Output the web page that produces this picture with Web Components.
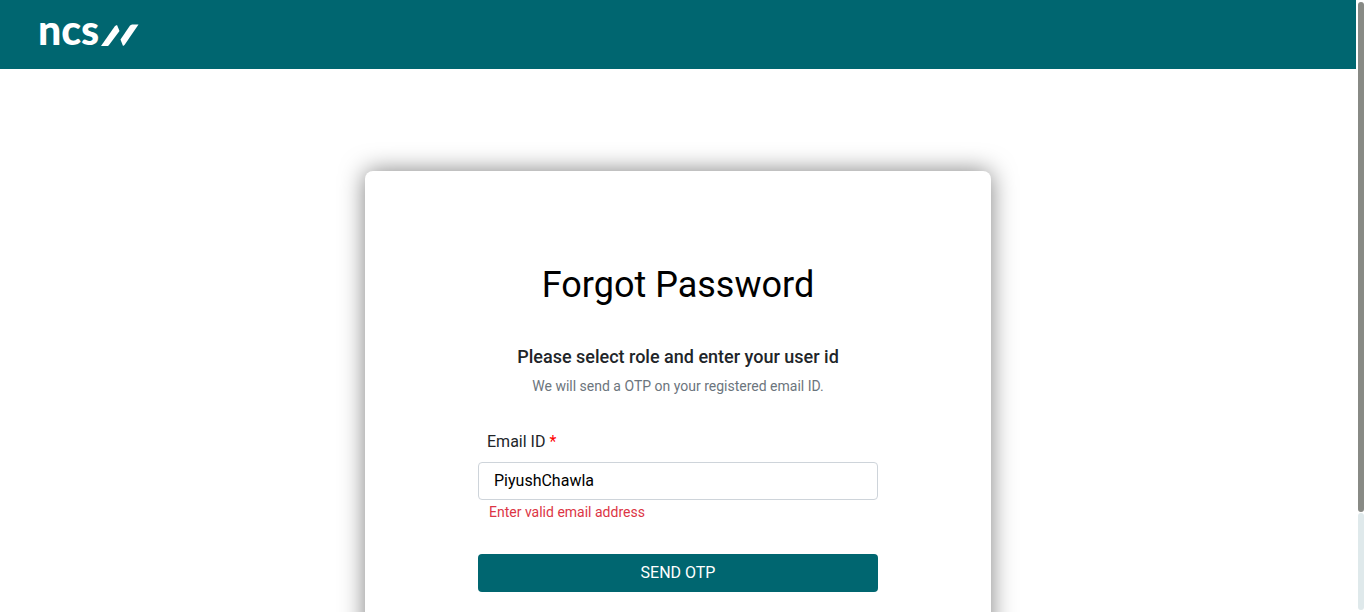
<!DOCTYPE html>
<html lang="en">
<head>
<meta charset="utf-8">
<meta name="viewport" content="width=device-width, initial-scale=1">
<title>Forgot Password</title>
<style>
  html, body { margin: 0; height: 100%; }
  body { font: 16px/24px Roboto, "Liberation Sans", sans-serif; color: #212529; background: #fff; }
</style>
</head>
<body>
<ncs-shell>
  <ncs-header slot="header"></ncs-header>
  <ncs-card>
    <ncs-heading>
      <span slot="title">Forgot Password</span>
      <span slot="lead">Please select role and enter your user id</span>
      <span slot="note">We will send a OTP on your registered email ID.</span>
    </ncs-heading>
    <ncs-otp-form></ncs-otp-form>
  </ncs-card>
</ncs-shell>
<script>
const define = (name, markup) => customElements.define(name, class extends HTMLElement {
  constructor() {
    super();
    this.attachShadow({ mode: 'open' }).innerHTML = markup;
  }
});

define('ncs-shell', `
  <style>
    :host { display: flex; height: 100vh; overflow: hidden; }
    .page { flex: 1; min-width: 0; overflow-y: auto; scrollbar-width: none; }
    main { padding: 102px 16px; }
  </style>
  <div class="page"><slot name="header"></slot><main><slot></slot></main></div>
  <ncs-rail></ncs-rail>`);

define('ncs-rail', `
  <style>
    :host { display: flex; flex-direction: column; gap: 1px; box-sizing: border-box; width: 10px; padding: 2px; }
    div { border-radius: 3px; }
    .thumb { flex: 21; background: #888a85; }
    .track { flex: 4; background: #dfe9eb; }
  </style>
  <div class="thumb"></div><div class="track"></div>`);

define('ncs-header', `
  <style>
    :host { display: flex; align-items: center; box-sizing: border-box; height: 69px; padding: 0 38px; background: #006670; }
    a { display: flex; align-items: center; gap: 2px; color: #fff; text-decoration: none; }
    span { font: 900 41px/48px Lato, "Liberation Sans", sans-serif; padding-bottom: 10px; }
    svg { display: block; width: 38px; height: 22px; }
  </style>
  <a href="#" aria-label="NCS home">
    <span>ncs</span>
    <svg viewBox="0 0 38 22" fill="#fff" aria-hidden="true">
      <path d="M0 22 L14 2 L16 1 L18.5 7 L8 21 L7 22Z"/>
      <path d="M37.5 .5 H31 L29 1.5 L19.5 15.5 L22 22 L23.5 21Z"/>
    </svg>
  </a>`);

define('ncs-card', `
  <style>
    :host { display: block; box-sizing: border-box; max-width: 626px; margin: 0 auto; padding: 88px 113px;
            background: #fff; border-radius: 8px; box-shadow: 0 0 24px rgba(0, 0, 0, .5); }
  </style>
  <slot></slot>`);

define('ncs-heading', `
  <style>
    :host { display: block; text-align: center; }
    h1 { margin: 0 0 32px; font-size: 36px; line-height: 52px; font-weight: 400; color: #000; }
    h2 { margin: 0 0 4px; font-size: 18px; line-height: 28px; font-weight: 500; }
    p { margin: 0; font-size: 14px; line-height: 22px; color: #6c757d; }
  </style>
  <h1><slot name="title"></slot></h1>
  <h2><slot name="lead"></slot></h2>
  <p><slot name="note"></slot></p>`);

define('ncs-otp-form', `
  <style>
    :host { display: block; margin-top: 33px; }
    form { display: flex; flex-direction: column; }
    label { padding: 0 9px; margin-bottom: 8px; }
    label b { font-weight: 400; color: #f00; }
    input, button { box-sizing: border-box; width: 100%; height: 38px; border-radius: 4px; font: inherit; }
    input { padding: 0 15px 2px; border: 1px solid #ced4da; background: #fff; color: #000; outline: 0; }
    .error { padding: 0 11px; font-size: 14px; line-height: 24px; color: #dc3545; margin-bottom: 30px; }
    button { border: 0; background: #006670; color: #fff; cursor: pointer; }
  </style>
  <form>
    <label for="email">Email ID <b>*</b></label>
    <input id="email" type="text" value="PiyushChawla" aria-describedby="error">
    <div class="error" id="error">Enter valid email address</div>
    <button type="button">SEND OTP</button>
  </form>`);
</script>
</body>
</html>
